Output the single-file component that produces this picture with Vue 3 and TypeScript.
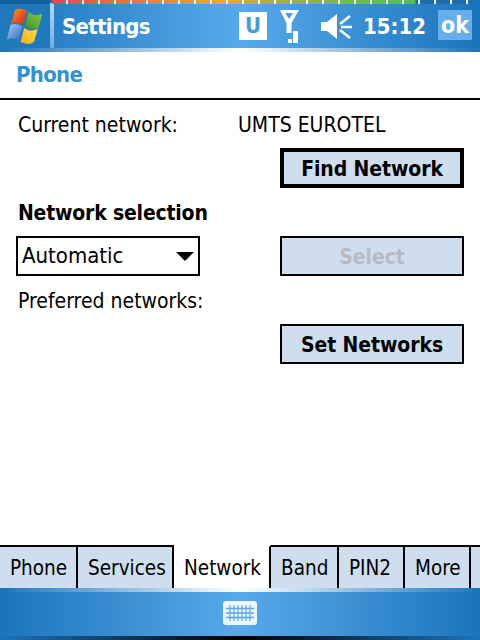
<script setup lang="ts">
const tabs = [
  { name: 'Phone', width: 78 },
  { name: 'Services', width: 96 },
  { name: 'Network', width: 97 },
  { name: 'Band', width: 68 },
  { name: 'PIN2', width: 66 },
  { name: 'More', width: 66 },
]
const activeTab = 'Network'
</script>

<template>
  <div class="screen">
    <header class="titlebar">
      <div class="strip"></div>
      <div class="start">
        <svg width="38" height="36" viewBox="0 0 42 38" preserveAspectRatio="none">
          <defs>
            <linearGradient id="red" x1="0" y1="0" x2="1" y2="1">
              <stop offset="0" stop-color="#f6a020" />
              <stop offset="0.6" stop-color="#ea4a1c" />
              <stop offset="1" stop-color="#c8321c" />
            </linearGradient>
            <linearGradient id="green" x1="1" y1="0" x2="0" y2="1">
              <stop offset="0" stop-color="#8fcf4a" />
              <stop offset="1" stop-color="#3f8f2c" />
            </linearGradient>
            <linearGradient id="blue" x1="0" y1="0" x2="1" y2="1">
              <stop offset="0" stop-color="#a9cdf2" />
              <stop offset="1" stop-color="#2a68c8" />
            </linearGradient>
            <linearGradient id="yellow" x1="0" y1="1" x2="1" y2="0">
              <stop offset="0" stop-color="#f0a818" />
              <stop offset="1" stop-color="#ffe448" />
            </linearGradient>
          </defs>
          <path d="M10 2 C14 0 19 1 23 3 L19 18 C15 16 10 15 6 17 Z" fill="url(#red)" />
          <path d="M25 4 C30 8 34 8 40 6 L36 21 C31 23 26 22 21 19 Z" fill="url(#green)" />
          <path d="M5 18 C9 16 14 17 18 19 L14 34 C10 32 5 31 1 33 Z" fill="url(#blue)" />
          <path d="M20 21 C25 24 30 25 35 22 L31 36 C26 39 21 38 16 36 Z" fill="url(#yellow)" />
        </svg>
      </div>
      <div class="title">Settings</div>
      <div class="tray">
        <span class="u-icon">U</span>
        <svg class="antenna" width="19" height="34" viewBox="0 0 19 34">
          <path d="M0 0 H19 L11.5 13 V23 H6.5 V13 Z M5 3 L9 9 L13 3 Z" fill="#fff" fill-rule="evenodd" />
          <rect x="8" y="29" width="4" height="4" fill="#fff" />
          <rect x="13" y="21" width="5" height="12" fill="#fff" />
        </svg>
        <svg class="speaker" width="31" height="27" viewBox="0 0 31 27">
          <path d="M0 9 H6 L16 1 V26 L6 18 H0 Z" fill="#fff" />
          <path d="M19 11 L29 3 M20 14 H31 M19 17 L29 25" stroke="#fff" stroke-width="2.4" fill="none" />
        </svg>
        <span class="clock">15:12</span>
        <span class="ok">ok</span>
      </div>
    </header>

    <div class="page-title">Phone</div>

    <main class="content">
      <div class="row current">
        <span class="label">Current network:</span>
        <span class="network">UMTS EUROTEL</span>
      </div>
      <div class="row end">
        <button class="btn focused">Find Network</button>
      </div>
      <div class="heading">Network selection</div>
      <div class="row between">
        <div class="combo">
          <span>Automatic</span>
          <i class="arrow"></i>
        </div>
        <button class="btn" disabled>Select</button>
      </div>
      <div class="label preferred">Preferred networks:</div>
      <div class="row end">
        <button class="btn">Set Networks</button>
      </div>
    </main>

    <nav class="tabs">
      <span
        v-for="tab in tabs"
        :key="tab.name"
        class="tab"
        :class="{ active: tab.name === activeTab }"
        :style="{ width: `${tab.width}px` }"
      >{{ tab.name }}</span>
      <span class="tab-rest"></span>
    </nav>

    <footer class="menubar">
      <svg width="34" height="24" viewBox="0 0 34 24">
        <rect x="0" y="0" width="34" height="24" rx="3" fill="#eef6fd" />
        <path d="M3 7.5 H31 M3 12 H31 M3 16.5 H31" stroke="#58a4e4" stroke-width="1.3" />
        <path d="M7 4 V20 M11 4 V20 M15 4 V20 M19 4 V20 M23 4 V20 M27 4 V20" stroke="#58a4e4" stroke-width="1.1" />
      </svg>
    </footer>
  </div>
</template>

<style>
html,
body {
  margin: 0;
  background: #fff;
}
</style>

<style scoped>
.screen {
  width: 480px;
  height: 640px;
  display: flex;
  flex-direction: column;
  overflow: hidden;
  font-family: "DejaVu Sans Condensed", "DejaVu Sans", sans-serif;
  font-stretch: condensed;
  color: #000;
}

.titlebar {
  position: relative;
  height: 52px;
  box-sizing: border-box;
  flex: none;
  display: flex;
  align-items: center;
  background: linear-gradient(90deg, #1b74bb 0%, #58a9ea 50%, #1b74bb 100%);
  border-bottom: 4px solid;
  border-image: linear-gradient(90deg, #1b74bb 0%, #fff 50%, #1b74bb 100%) 1;
}

.strip {
  position: absolute;
  top: 0;
  left: 52px;
  width: 420px;
  height: 4px;
  background:
    repeating-linear-gradient(90deg, transparent 0 14px, #fff 14px 16px),
    linear-gradient(90deg, #e0465c 0, #e8853c 110px, #e4ac30 170px, #aab03c 220px, #5cbc5c 320px, #50bc60 363px, #1a6cac 364px);
}

.start {
  width: 54px;
  height: 48px;
  flex: none;
  display: flex;
  align-items: center;
  justify-content: center;
  padding-top: 4px;
  box-sizing: border-box;
  border-right: 4px solid;
  border-image: linear-gradient(180deg, #1b6bab 0 4px, #b4d8f4 4px, #6eaee4 100%) 1;
  background: linear-gradient(180deg, #11619f 0 4px, #2079bb 4px);
}

.title {
  margin: 4px 0 0 8px;
  font-size: 22px;
  letter-spacing: -0.7px;
  font-weight: 700;
  color: #fff;
}

.tray {
  margin: 4px 0 0 auto;
  display: flex;
  align-items: center;
  color: #fff;
  font-weight: 700;
}

.u-icon {
  width: 28px;
  height: 28px;
  margin-right: 13px;
  background: #fff;
  color: #4a9ad8;
  font-size: 22px;
  line-height: 28px;
  text-align: center;
}

.antenna {
  margin: 1px 22px 0 0;
}

.speaker {
  margin-right: 11px;
}

.clock {
  width: 60px;
  font-size: 22px;
  margin-right: 15px;
}

.ok {
  width: 34px;
  height: 30px;
  margin: -2px 8px 0 0;
  background: #68aeea;
  font-size: 23px;
  line-height: 30px;
  text-align: center;
}

.page-title {
  flex: none;
  height: 48px;
  box-sizing: border-box;
  padding: 10px 16px 0;
  border-bottom: 2px solid #000;
  font-size: 22px;
  letter-spacing: -0.7px;
  line-height: 26px;
  font-weight: 700;
  color: #3493cf;
}

.content {
  flex: 1;
  padding: 12px 16px 0 18px;
  font-size: 21px;
  line-height: 26px;
}

.row {
  display: flex;
}

.current .label {
  width: 220px;
}

.end {
  justify-content: flex-end;
}

.between {
  justify-content: space-between;
  margin-left: -2px;
}

.heading {
  font-weight: 700;
  margin: 12px 0 10px;
  letter-spacing: -0.2px;
}

.preferred {
  margin: 12px 0 10px;
}

.btn {
  width: 184px;
  height: 40px;
  box-sizing: border-box;
  border: 2px solid #000;
  border-radius: 0;
  padding: 1px 0 0;
  background: #cfdeee;
  font: 700 21px "DejaVu Sans Condensed", "DejaVu Sans", sans-serif;
  font-stretch: condensed;
  letter-spacing: -0.1px;
  color: #000;
}

.btn:disabled {
  color: #b8bcc2;
}

.focused {
  border-width: 4px;
}

.current + .end {
  margin-top: 10px;
}

.combo {
  width: 184px;
  height: 40px;
  box-sizing: border-box;
  border: 2px solid #000;
  padding-left: 4px;
  display: flex;
  align-items: center;
  justify-content: space-between;
  font-size: 22px;
}

.arrow {
  width: 0;
  height: 0;
  margin-right: 4px;
  border-left: 9px solid transparent;
  border-right: 9px solid transparent;
  border-top: 9px solid #000;
}

.tabs {
  flex: none;
  display: flex;
  height: 43px;
}

.tab {
  padding-left: 10px;
  box-sizing: border-box;
  flex: none;
  border-top: 2px solid #000;
  border-right: 2px solid #000;
  background: #cfdeee;
  font-size: 20.5px;
  line-height: 43px;
}

.tab.active {
  background: #fff;
  border-top-color: #fff;
}

.tab-rest {
  flex: 1;
  border-top: 2px solid #000;
  background: #cfdeee;
}

.menubar {
  flex: none;
  height: 52px;
  box-sizing: border-box;
  padding-bottom: 3px;
  display: flex;
  align-items: center;
  justify-content: center;
  background:
    linear-gradient(90deg, #1b74bb 0%, #fff 50%, #1b74bb 100%) top / 100% 4px no-repeat,
    linear-gradient(90deg, #1b74bb 0%, #000 50%, #1b74bb 100%) bottom / 100% 4px no-repeat,
    linear-gradient(90deg, #1b74bb 0%, #58a9ea 50%, #1b74bb 100%);
}
</style>
